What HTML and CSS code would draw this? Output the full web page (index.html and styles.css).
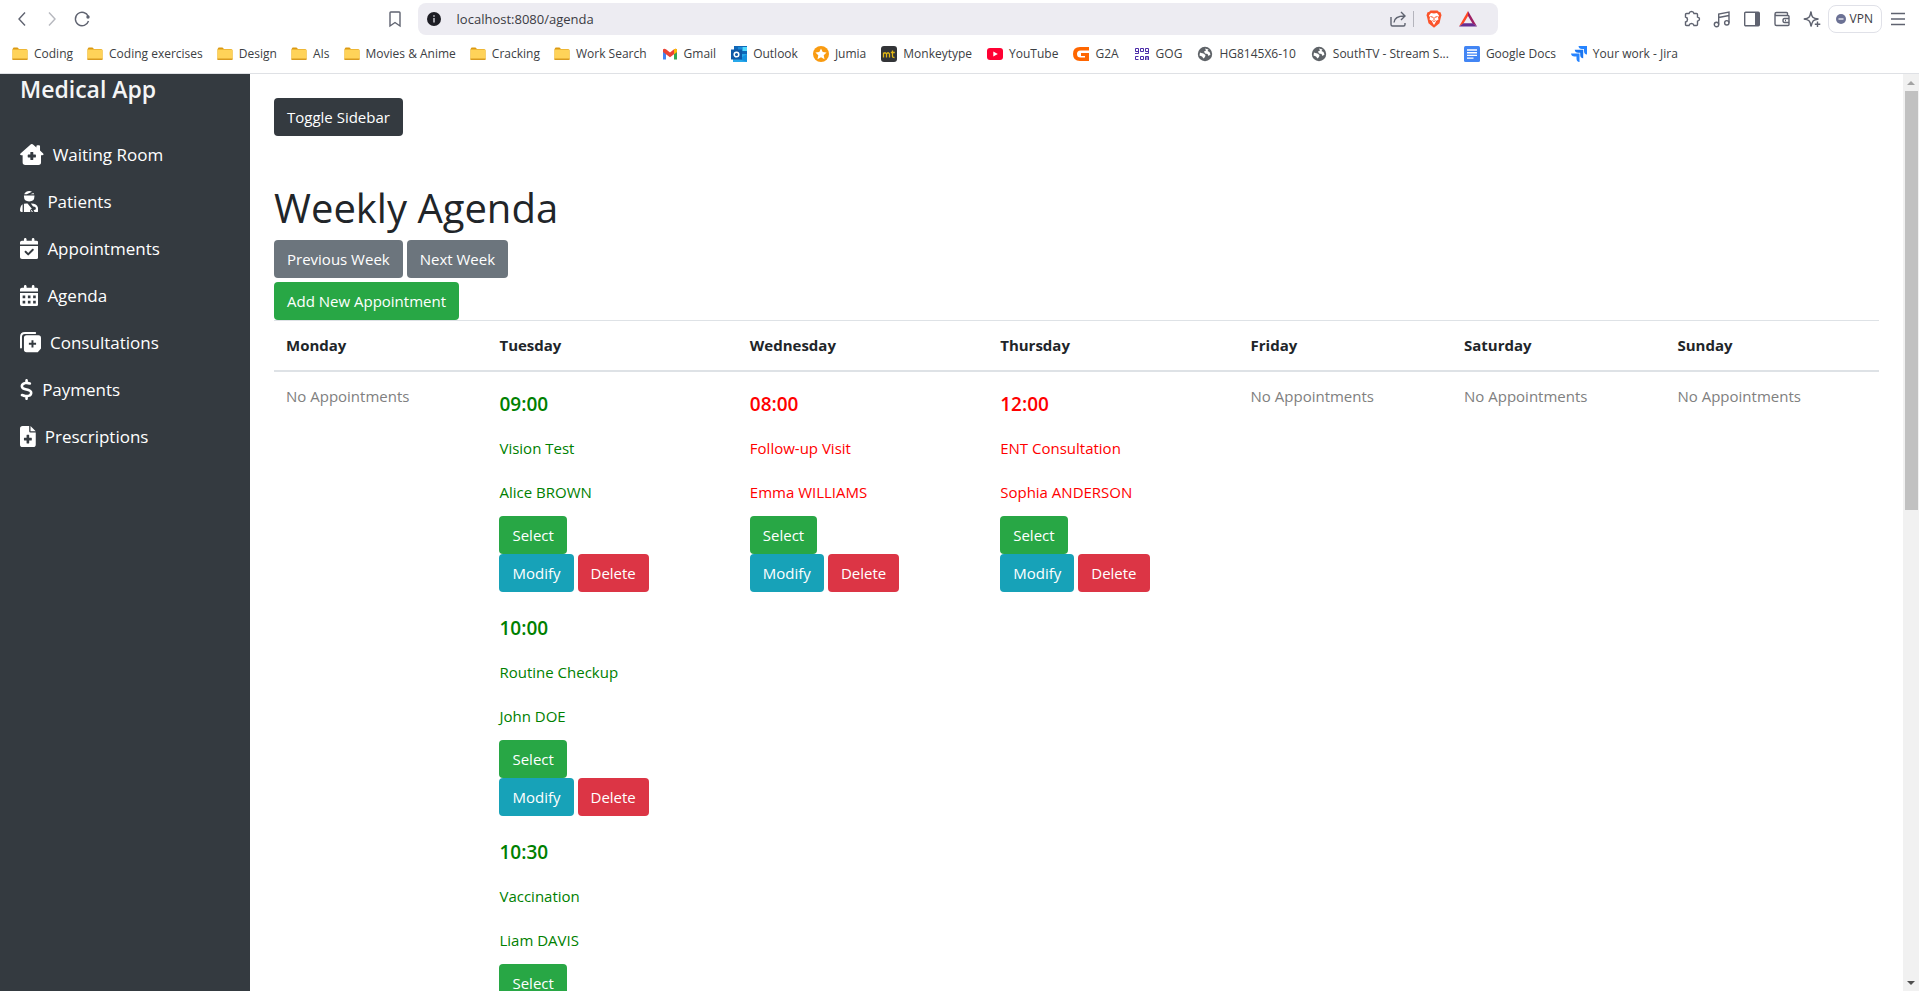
FILE: index.html
```html
<!DOCTYPE html>
<html lang="en">
<head>
<meta charset="utf-8">
<title>Weekly Agenda</title>
<link rel="stylesheet" href="styles.css">
</head>
<body>
<svg class="sprite" aria-hidden="true">
  <symbol id="folder" viewBox="0 0 16 16"><path d="M1 2.500Q1 1.500 2 1.500H5.500L7 3H14Q15.500 3 15.500 4.500V13H.5V3Z" fill="#dc9a12"/><path d="M.5 14V4.500Q.5 3.500 1.500 3.500H14.500Q15.500 3.500 15.500 4.500V13Q15.500 14 14.500 14Z" fill="#ffd359"/><path d="M.5 12.500H15.500V13.500Q15.500 14 15 14H1Q.5 14 .5 13.500Z" fill="#d99b20"/></symbol>
  <symbol id="globe" viewBox="0 0 16 16"><circle cx="8" cy="8" r="7.200" fill="#5f6368"/><path d="M3 6.500Q4.500 7.500 6 7.200L8.500 9 8 11 6.500 12.500 5 10.500 2.500 9.500ZM8 2.500 11.500 3.500 10.500 5 12.500 6 13.500 8.500 11.500 10 10.500 8 8 7.500 7 5.500 9 4.500Z" fill="#fff"/></symbol>
</svg>
<div class="window">
  <header class="browser">
    <div class="toolbar">
      <div class="history">
        <button class="tool" aria-label="Back"><svg viewBox="0 0 18 18"><path d="M12 2.500 6 9l6 6.500" /></svg></button>
        <button class="tool faded" aria-label="Forward"><svg viewBox="0 0 18 18"><path d="M6 2.500 12 9l-6 6.500" /></svg></button>
        <button class="tool" aria-label="Reload"><svg viewBox="0 0 18 18"><path d="M15.500 11A6.700 6.700 0 1 1 15.300 6.500"/><circle cx="15" cy="7" r="1.700" fill="#5f6370" stroke="none"/></svg></button>
      </div>
      <button class="tool" aria-label="Bookmark"><svg viewBox="0 0 18 18"><path d="M4 2.800Q4 2 4.800 2h8.400Q14 2 14 2.800V16L9 12.500 4 16Z"/></svg></button>
      <div class="address">
        <svg class="info" viewBox="0 0 14 14"><circle cx="7" cy="7" r="7" fill="#1d1d24"/><path d="M7 6v4.500M7 3.300v1.500" stroke="#c9c9d0" stroke-width="1.500"/></svg>
        <input type="text" aria-label="Address" value="localhost:8080/agenda">
        <button class="tool" aria-label="Share"><svg viewBox="0 0 18 18"><path d="M2 7v7.500Q2 16 3.500 16h11q1.500 0 1.500-1.500V13M5 12.500Q5.500 6 15.500 6M12 2l4 4-4 4"/></svg></button>
        <span class="divider"></span>
        <button class="tool brave" aria-label="Shields"><svg viewBox="0 0 18 18"><path d="M5.500.5h7L14 2l1.500.3 1 3-.6 2-1.400 6L9 17.700 3.500 13.300l-1.400-6-.6-2 1-3L4 2Z" fill="#fb542b" stroke="none"/><path d="M9 3.500 12 3l2 2.500-1 2 .5 2-2.500 1.500-.5 1.500L9 15l-1.500-2.500L7 11 4.500 9.500l.5-2-1-2L6 3Z" fill="#fff" stroke="none"/><path d="m5.500 6.500 2.500.8M12.500 6.500 10 7.300M9 7v3M7.500 10.500 9 11.500l1.500-1" stroke="#fb542b" stroke-width="1"/></svg></button>
        <button class="tool" aria-label="Rewards"><svg viewBox="0 0 18 18"><g stroke="none"><path d="M9 1v5L4.500 13.500 0 16.500Z" fill="#ff4724"/><path d="m9 1 9 15.500-4.500-3L9 6Z" fill="#9e1f63"/><path d="M0 16.500 4.500 13.200h9l4.500 3.300Z" fill="#662d91"/></g></svg></button>
      </div>
      <div class="tools">
        <button class="tool" aria-label="Extensions"><svg viewBox="0 0 18 18"><path d="M3.500 3.500H6Q6.500 1.500 8.500 1.500T11 3.500h2.500Q14.500 3.500 14.500 4.500V7Q16.500 7.500 16.500 9T14.500 11.200V14.500Q14.500 15.500 13.500 15.500H11Q10.500 13.500 8.500 13.500T6 15.500H3.500Q2.500 15.500 2.500 14.500V12Q4.500 11.500 4.500 9.500T2.500 7V4.500Q2.500 3.500 3.500 3.500Z"/></svg></button>
        <button class="tool" aria-label="Media"><svg viewBox="0 0 18 18"><circle cx="3.500" cy="14.500" r="2.200"/><circle cx="13.800" cy="12.800" r="2.200"/><path d="M5.700 14.500V4L16 2v10.800M5.700 7.500 16 5.500"/></svg></button>
        <button class="tool" aria-label="Side panel"><svg viewBox="0 0 18 18"><rect x="1.700" y="2.200" width="14.600" height="13.600" rx="1"/><path d="M12 2.500h4v13h-4z" fill="#5f6370" stroke="none"/></svg></button>
        <button class="tool" aria-label="Wallet"><svg viewBox="0 0 18 18"><path d="M14.500 5.500V3.500Q14.500 2.500 13.500 2.500H3.500Q2 2.500 2 4t1.500 1.500H15q1 0 1 1v8q0 1-1 1H3.500Q2 15.500 2 14V4M16 8.500h-4.500Q10 8.500 10 10.500t1.500 2H16M12 10.500h1"/></svg></button>
        <button class="tool" aria-label="Assistant"><svg viewBox="0 0 18 18"><path d="M8 1.500Q8.500 6 9.800 7.200T15.500 9q-4 .5-5.200 1.800T8 16.500Q7.500 12 6 10.700T.8 9Q4.800 8.500 6 7.200T8 1.500Z"/><path d="M14.500 11.500v5.500M11.800 14.300h5.500"/></svg></button>
      </div>
      <button class="vpn"><svg viewBox="0 0 10 10"><circle cx="5" cy="5" r="5" fill="#6b7194"/><path d="M2.500 5h5" stroke="#fff" stroke-width="1.200"/></svg>VPN</button>
      <button class="tool" aria-label="Menu"><svg viewBox="0 0 18 18"><path d="M2 3.500h14M2 9h14M2 14.500h14"/></svg></button>
    </div>
    <nav class="bookmarks" aria-label="Bookmarks">
      <div class="folders">
        <a href="#"><svg><use href="#folder"/></svg>Coding</a>
        <a href="#"><svg><use href="#folder"/></svg>Coding exercises</a>
        <a href="#"><svg><use href="#folder"/></svg>Design</a>
        <a href="#"><svg><use href="#folder"/></svg>AIs</a>
        <a href="#"><svg><use href="#folder"/></svg>Movies &amp; Anime</a>
        <a href="#"><svg><use href="#folder"/></svg>Cracking</a>
        <a href="#"><svg><use href="#folder"/></svg>Work Search</a>
      </div>
      <a href="#"><svg viewBox="0 0 16 16"><path d="M1 4v9.500h3V7z" fill="#4285f4"/><path d="M15 4v9.500h-3V7z" fill="#34a853"/><path d="M1 3.500Q2 2 4 3.200l4 3.300 4-3.300Q14 2 15 3.500V6L8 11.200 1 6Z" fill="#ea4335"/><path d="M12 3.200Q14 2 15 3.500V6l-3 2.300Z" fill="#fbbc04"/></svg>Gmail</a>
      <a href="#"><svg viewBox="0 0 16 16"><path d="M3 0h13v8H3z" fill="#0f67b7"/><path d="M7 1h4.500v4H7z" fill="#1b8ad8"/><path d="M11.500 1H16v4h-4.500z" fill="#50d9ff"/><path d="M2 8h14v8H2z" fill="#28a8ea"/><path d="m16 8-8 5 8 3z" fill="#1490df"/><path d="M0 3.500h11v10H0z" fill="#0f59a8"/><circle cx="5.500" cy="8.500" r="2.300" fill="none" stroke="#fff" stroke-width="1.500"/></svg>Outlook</a>
      <a href="#"><svg viewBox="0 0 16 16"><circle cx="8" cy="8" r="8" fill="#f99b11"/><path d="m8 2.500 1.700 3.600 3.900.5-2.900 2.700.8 3.900L8 11.300l-3.500 1.900.8-3.900-2.900-2.700 3.900-.5Z" fill="#fff"/></svg>Jumia</a>
      <a href="#"><svg viewBox="0 0 16 16"><rect width="16" height="16" rx="3" fill="#323437"/><path d="M2.500 11.500V6.500M2.500 8q1.500-2.500 3 0v3.500M5.500 8q1.500-2.500 3 0v3.500M11.500 4.500v6q0 1 2 1M9.800 6.500h4" fill="none" stroke="#e2b714" stroke-width="1.300"/></svg>Monkeytype</a>
      <a href="#"><svg viewBox="0 0 16 16"><rect y="2" width="16" height="12" rx="3" fill="#f03"/><path d="m6.300 5.500 4.500 2.500-4.500 2.500Z" fill="#fff"/></svg>YouTube</a>
      <a href="#"><svg viewBox="0 0 16 16"><path d="M16 1H7Q0 1 0 8t7 7h9V7H8v3h4v1.500H7.500Q4 11.500 4 8t3.500-3.500H16Z" fill="#f60"/></svg>G2A</a>
      <a href="#"><svg viewBox="0 0 16 16"><g fill="none" stroke="#4a2ba8"><path d="M4.500 5.500h-3v-3h3v5H1M6.500 2.500h3v3h-3zM14.500 5.500h-3v-3h3v5H11M4.500 10.500h-3v3h3M6.500 10.500h3v3h-3zM11.500 14v-3.500h3V14M13 10.500V14"/></g></svg>GOG</a>
      <a href="#"><svg><use href="#globe"/></svg>HG8145X6-10</a>
      <a href="#"><svg><use href="#globe"/></svg>SouthTV - Stream S...</a>
      <a href="#"><svg viewBox="0 0 16 16"><rect width="16" height="16" rx="1.500" fill="#4285f4"/><path d="M3 4h10M3 6.700h10M3 9.400h10M3 12.100h6.500" stroke="#fff" stroke-width="1.400"/></svg>Google Docs</a>
      <a href="#"><svg viewBox="0 0 16 16"><path d="M7.500 0H16v8.500q-3-.3-3-3.500V3h-2Q7.800 3 7.500 0Z" fill="#2684ff"/><path d="M3.700 3.800h8.500v8.500q-3-.3-3-3.500v-2h-2q-3.200 0-3.500-3Z" fill="#1a75f0"/><path d="M0 7.500h8.500V16q-3-.3-3-3.500v-2h-2Q.3 10.500 0 7.500Z" fill="#2684ff"/></svg>Your work - Jira</a>
    </nav>
  </header>
  <div class="page">
    <aside class="sidebar">
      <h2 class="brand">Medical App</h2>
      <nav class="menu">
        <a href="#"><svg viewBox="0 0 576 512"><path fill-rule="evenodd" d="M266 8q22-16 44 0l90 76V56q0-24 24-24h40q24 0 24 24v105l77 69q16 18 5 34-8 12-26 12h-32l1 170q0 66-64 66H128q-64 0-64-66V276H32q-18 0-26-12-11-17 6-34ZM264 192q-12 0-12 12v52h-52q-12 0-12 12v48q0 12 12 12h52v52q0 12 12 12h48q12 0 12-12v-52h52q12 0 12-12v-48q0-12-12-12h-52v-52q0-12-12-12Z"/></svg>Waiting Room</a>
        <a href="#"><svg viewBox="0 0 448 512"><path d="M104 76Q142 0 224 0q38 0 68 17L166 82h-62zM328 50q12 15 17 32H250zM96 112h256v18q0 126-128 126T96 130ZM64 325v187H36Q0 512 0 476 0 367 64 325ZM96 311q40-13 88-7l105 128q-43 8-43 48 0 20 10 32H96zM284 464h-10q-8 16 2 32 6 16 22 16h18zM265 304q183-6 183 172 0 36-36 36h-59l-21-48q56-5 56-40 0-50-69-46Z"/></svg>Patients</a>
        <a href="#"><svg viewBox="0 0 448 512"><path d="M128 0c17.700 0 32 14.300 32 32V64H288V32c0-17.700 14.300-32 32-32s32 14.300 32 32V64h48c26.500 0 48 21.500 48 48v48H0V112C0 85.500 21.500 64 48 64H96V32c0-17.700 14.300-32 32-32zM0 192H448V464c0 26.500-21.500 48-48 48H48c-26.500 0-48-21.500-48-48V192zM329 305c9.400-9.400 9.400-24.600 0-33.900s-24.600-9.400-33.900 0l-95 95-47-47c-9.400-9.400-24.600-9.400-33.900 0s-9.400 24.600 0 33.900l64 64c9.400 9.400 24.600 9.400 33.900 0L329 305z"/></svg>Appointments</a>
        <a href="#"><svg viewBox="0 0 448 512"><path fill-rule="evenodd" d="M128 0c17.700 0 32 14.300 32 32V64H288V32c0-17.700 14.300-32 32-32s32 14.300 32 32V64h48c26.500 0 48 21.500 48 48v48H0V112C0 85.500 21.500 64 48 64H96V32c0-17.700 14.300-32 32-32zM0 192H448V464c0 26.500-21.500 48-48 48H48c-26.500 0-48-21.500-48-48ZM64 256v64h64v-64zM192 256v64h64v-64zM320 256v64h64v-64zM64 384v64h64v-64zM192 384v64h64v-64zM320 384v64h64v-64z"/></svg>Agenda</a>
        <a href="#"><svg viewBox="0 0 512 512"><path d="M24 380V120Q24 24 120 24H370" fill="none" stroke="#fff" stroke-width="48" stroke-linecap="round"/><path fill-rule="evenodd" d="M160 80H448q64 0 64 64V400l-80 92H160q-64 0-64-64V144q0-64 64-64ZM280 200v64h-64v48h64v64h48v-64h64v-48h-64v-64Z"/></svg>Consultations</a>
        <a href="#"><svg viewBox="0 0 320 512"><path d="M160 0c17.700 0 32 14.300 32 32V67.700c1.600 .2 3.100 .4 4.700 .7c.4 .1 .7 .1 1.100 .2l48 8.800c17.400 3.200 28.900 19.900 25.700 37.200s-19.900 28.900-37.200 25.700l-47.500-8.700c-31.300-4.600-58.900-1.500-78.300 6.200s-27.200 18.300-29 28.100c-2 10.700-.5 16.700 1.200 20.400c1.800 3.900 5.500 8.300 12.800 13.200c16.300 10.700 41.300 17.700 73.700 26.300l2.900 .8c28.600 7.600 63.600 16.800 89.600 33.800c14.200 9.300 27.600 21.900 35.900 39.500c8.500 17.900 10.300 37.900 6.400 59.200c-6.900 38-33.100 63.400-65.600 76.700c-13.700 5.600-28.600 9.200-44.400 11V480c0 17.700-14.300 32-32 32s-32-14.300-32-32V445.100c-.4-.1-.9-.1-1.300-.2l-.2 0 0 0c-24.400-3.800-64.500-14.300-91.500-26.300c-16.100-7.200-23.400-26.100-16.200-42.200s26.100-23.400 42.200-16.200c20.900 9.300 55.300 18.500 75.200 21.600c31.900 4.700 58.200 2 76-5.300c16.900-6.900 24.600-16.900 26.800-28.900c1.900-10.600 .4-16.700-1.300-20.400c-1.900-4-5.600-8.400-13-13.300c-16.400-10.700-41.500-17.700-74-26.300l-2.800-.7 0 0C119.400 279.300 84.400 270 58.400 253c-14.200-9.300-27.500-22-35.800-39.600c-8.400-17.900-10.100-37.900-6.100-59.200C23.700 116 52.300 91.200 84.800 78.300c13.300-5.300 27.900-8.900 43.200-11V32c0-17.700 14.300-32 32-32z"/></svg>Payments</a>
        <a href="#"><svg viewBox="0 0 384 512"><path fill-rule="evenodd" d="M64 0H224V128q0 32 32 32H384V448q0 64-64 64H64Q0 512 0 448V64Q0 0 64 0ZM256 0 384 128H256ZM160 224v64h-56q-8 0-8 8v48q0 8 8 8h56v64q0 8 8 8h48q8 0 8-8v-64h56q8 0 8-8v-48q0-8-8-8h-56v-64q0-8-8-8h-48q-8 0-8 8Z"/></svg>Prescriptions</a>
      </nav>
    </aside>
    <main class="content">
      <button class="btn dark">Toggle Sidebar</button>
      <h1>Weekly Agenda</h1>
      <div class="row">
        <button class="btn grey">Previous Week</button>
        <button class="btn grey">Next Week</button>
      </div>
      <div class="row add"><button class="btn green">Add New Appointment</button></div>
      <table class="agenda">
        <thead>
          <tr><th>Monday</th><th class="busy">Tuesday</th><th class="busy">Wednesday</th><th class="busy">Thursday</th><th>Friday</th><th>Saturday</th><th>Sunday</th></tr>
        </thead>
        <tbody>
          <tr>
            <td class="none">No Appointments</td>
            <td>
              <article class="slot free"><h2>09:00</h2><p>Vision Test</p><p>Alice BROWN</p>
                <div class="actions"><button class="btn green">Select</button><div class="row"><button class="btn teal">Modify</button><button class="btn red">Delete</button></div></div></article>
              <article class="slot free"><h2>10:00</h2><p>Routine Checkup</p><p>John DOE</p>
                <div class="actions"><button class="btn green">Select</button><div class="row"><button class="btn teal">Modify</button><button class="btn red">Delete</button></div></div></article>
              <article class="slot free"><h2>10:30</h2><p>Vaccination</p><p>Liam DAVIS</p>
                <div class="actions"><button class="btn green">Select</button></div></article>
            </td>
            <td>
              <article class="slot taken"><h2>08:00</h2><p>Follow-up Visit</p><p>Emma WILLIAMS</p>
                <div class="actions"><button class="btn green">Select</button><div class="row"><button class="btn teal">Modify</button><button class="btn red">Delete</button></div></div></article>
            </td>
            <td>
              <article class="slot taken"><h2>12:00</h2><p>ENT Consultation</p><p>Sophia ANDERSON</p>
                <div class="actions"><button class="btn green">Select</button><div class="row"><button class="btn teal">Modify</button><button class="btn red">Delete</button></div></div></article>
            </td>
            <td class="none">No Appointments</td>
            <td class="none">No Appointments</td>
            <td class="none">No Appointments</td>
          </tr>
        </tbody>
      </table>
    </main>
    <div class="scrollbar" aria-hidden="true">
      <svg viewBox="0 0 16 17"><path d="m4 11 4-4 4 4z" fill="#a3a3a3"/></svg>
      <div class="track"><div class="thumb"></div></div>
      <svg viewBox="0 0 16 17"><path d="m4 7 4 4 4-4z" fill="#505050"/></svg>
    </div>
  </div>
</div>
</body>
</html>
```
FILE: styles.css
```css
* { box-sizing: border-box; }
body { margin: 0; font: 15px/24px "Open Sans", "Noto Sans", sans-serif; color: #212529; background: #fff; }
button, input { font: inherit; color: inherit; border: 0; background: none; padding: 0; margin: 0; }
h1, h2, p { margin: 0; }
a { color: inherit; text-decoration: none; }
.sprite { display: none; }
.window { display: flex; flex-direction: column; height: 100vh; overflow: hidden; }

/* browser chrome */
.browser { flex: none; border-bottom: 1px solid #dfe1e5; }
.toolbar { display: flex; align-items: center; height: 38px; padding: 0 12px 0 13px; }
.history { display: flex; gap: 12px; margin-right: auto; }
.tool { flex: none; width: 18px; height: 18px; }
.tool svg { display: block; width: 18px; height: 18px; fill: none; stroke: #5f6370; stroke-width: 1.4; }
.faded { opacity: .45; }
.address { display: flex; align-items: center; width: 1080px; height: 32px; margin: 0 185px 0 14px; padding: 0 21px 0 9px; border-radius: 8px; background: #edecf2; }
.address .info { width: 14px; height: 14px; margin-right: 16px; }
.address input { flex: 1; min-width: 0; font-size: 13px; color: #3b3b43; outline: 0; }
.divider { width: 1px; height: 16px; margin: 0 11px 0 6px; background: #b4b4bc; }
.brave { margin-right: 16px; }
.tools { display: flex; gap: 12px; margin-right: 7px; }
.vpn { display: flex; align-items: center; gap: 4px; height: 28px; margin-right: 7px; padding: 0 8px 0 7px; border: 1px solid #e0e1e8; border-radius: 8px; font-size: 12px; color: #3b3b43; }
.vpn svg { width: 10px; height: 10px; }
.bookmarks { display: flex; gap: 15px; height: 35px; padding: 0 12px 3px; align-items: center; font-size: 12px; line-height: 16px; color: #3c4043; white-space: nowrap; }
.folders { display: flex; gap: 14px; }
.bookmarks a { display: flex; align-items: center; gap: 6px; }
.bookmarks svg { width: 16px; height: 16px; }

/* application */
.page { flex: 1; min-height: 0; display: flex; overflow: hidden; }
.sidebar { flex: none; width: 250px; padding: 0 20px; background: #343a40; color: #fff; }
.brand { font-size: 23px; line-height: 30px; font-weight: 600; color: #f4f5f6; }
.menu { display: flex; flex-direction: column; gap: 20px; margin-top: 37px; font-size: 17px; line-height: 27px; }
.menu a { display: flex; align-items: center; gap: 9px; }
.menu svg { height: 21px; fill: #fff; }
.content { flex: 1; min-width: 0; padding: 24px 24px 0; }
.btn { display: block; padding: 7px 13px; border-radius: 4px; color: #fff; white-space: nowrap; }
.dark { background: #343a40; }
.grey { background: #6c757d; }
.green { background: #28a745; }
.teal { background: #17a2b8; }
.red { background: #dc3545; }
.row { display: flex; gap: 4px; }
.add { margin-top: 4px; }
h1 { margin: 48px 0 8px; font-size: 40px; line-height: 48px; font-weight: 500; }
.agenda { width: 100%; table-layout: fixed; border-collapse: collapse; }
.agenda th { width: 13.3%; padding: 12px 12px 13px; border-top: 1px solid #dee2e6; border-bottom: 2px solid #dee2e6; text-align: left; font-weight: 700; }
.agenda .busy { width: 15.6%; }
.agenda td { padding: 12px; vertical-align: top; }
.none { color: #808080; }
.slot { padding: 8px 0 16px; }
.slot h2 { font-size: 19px; line-height: 24px; font-weight: 600; }
.slot p { margin-top: 20px; }
.free { color: #008000; }
.taken { color: #f00; }
.actions { margin-top: 12px; }

.scrollbar { flex: none; display: flex; flex-direction: column; width: 16px; background: #f1f1f1; }
.scrollbar svg { width: 16px; height: 17px; }
.track { flex: 1; padding: 0 1px 0 2px; }
.thumb { height: 47.5%; background: #c1c1c1; }
```
